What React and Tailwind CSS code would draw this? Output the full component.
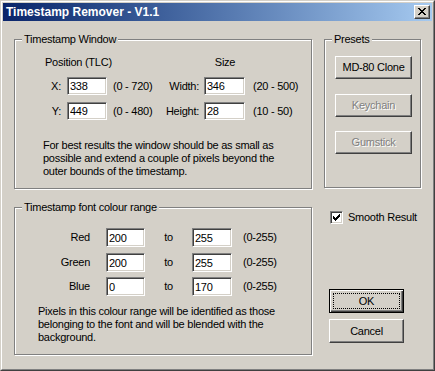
import React from "react";

const raised = "border border-t-white border-l-white border-r-[#404040] border-b-[#404040] shadow-[inset_-1px_-1px_0_#808080] bg-[#d4d0c8]";
const sunken = "border border-t-[#808080] border-l-[#808080] border-r-white border-b-white shadow-[inset_1px_1px_0_#404040,inset_-1px_-1px_0_#d4d0c8] bg-white";
const etched = "relative border border-[#808080] shadow-[inset_1px_1px_0_#fff,1px_1px_0_#fff]";

const Field = ({ value, w = "w-[40px]", h = "h-[18px]" }) => (
    <input
        readOnly
        value={value}
        className={`${sunken} ${w} ${h} pl-[2px] text-[11px] tracking-[-0.25px] leading-none outline-none font-['Liberation_Sans',Arial,sans-serif]`}
    />
);

const GroupLabel = ({ children, left = "left-[7px]" }) => (
    <span className={`absolute -top-[7px] ${left} px-[2px] leading-[13px] bg-[#d4d0c8]`}>{children}</span>
);

const Button = ({ children, disabled, className = "" }) => (
    <div className={`${raised} flex items-center justify-center ${className}`}>
        <span className={disabled ? "text-[#808080] [text-shadow:1px_1px_0_#fff]" : ""}>{children}</span>
    </div>
);

const CloseIcon = () => (
    <svg width="8" height="7" viewBox="0 0 8 7" shapeRendering="crispEdges">
        <path d="M0 0h2v1H0zM6 0h2v1H6zM1 1h2v1H1zM5 1h2v1H5zM2 2h4v1H2zM3 3h2v1H3zM2 4h4v1H2zM1 5h2v1H1zM5 5h2v1H5zM0 6h2v1H0zM6 6h2v1H6z" fill="#000" />
    </svg>
);

const CheckIcon = () => (
    <svg width="7" height="7" viewBox="0 0 7 7" shapeRendering="crispEdges">
        <path d="M6 0h1v1H6zM5 1h2v1H5zM0 2h1v1H0zM4 2h3v1H4zM0 3h2v1H0zM3 3h3v1H3zM0 4h5v1H0zM1 5h3v1H1zM2 6h1v1H2z" fill="#000" />
    </svg>
);

const ColourRow = ({ label, from, to, className = "" }) => (
    <div className={`flex items-center ${className}`}>
        <span className="w-[75px] text-right">{label}</span>
        <span className="ml-[16px]"><Field value={from} w="w-[39px]" h="h-[19px]" /></span>
        <span className="w-[47px] text-center">to</span>
        <Field value={to} w="w-[40px]" h="h-[19px]" />
        <span className="ml-[11px]">(0-255)</span>
    </div>
);

export default function App() {
    return (
        <div className="w-[435px] h-[371px] border border-t-[#d4d0c8] border-l-[#d4d0c8] border-r-[#404040] border-b-[#404040] bg-[#d4d0c8] text-[11px] tracking-[-0.25px] text-black font-['Liberation_Sans',Arial,sans-serif]">
            <div className="h-full border border-t-white border-l-white border-r-[#808080] border-b-[#808080] p-px flex flex-col">
                {/* Title bar */}
                <div className="h-[18px] flex items-center pl-[3px] pr-[2px] bg-gradient-to-r from-[#0a246a] to-[#a6caf0]">
                    <span className="text-white font-bold text-[12px] tracking-normal leading-none">Timestamp Remover - V1.1</span>
                    <div className={`${raised} ml-auto w-[16px] h-[14px] flex items-start justify-start pl-[3px] pt-[2px]`}>
                        <CloseIcon />
                    </div>
                </div>

                <div className="flex pl-[11px] pt-[18px]">
                    {/* Left column */}
                    <div className="flex flex-col">
                        <div className={`${etched} w-[298px] h-[150px]`}>
                            <GroupLabel>Timestamp Window</GroupLabel>
                            <div className="flex pt-[16px] leading-[13px]">
                                <span className="ml-[30px]">Position (TLC)</span>
                                <span className="ml-[103px]">Size</span>
                            </div>
                            <div className="flex items-center mt-[8px]">
                                <span className="w-[46px] text-right">X:</span>
                                <span className="ml-[6px]"><Field value="338" /></span>
                                <span className="ml-[6px] w-[50px]">(0 - 720)</span>
                                <span className="w-[36px] text-right">Width:</span>
                                <span className="ml-[5px]"><Field value="346" w="w-[41px]" /></span>
                                <span className="ml-[8px]">(20 - 500)</span>
                            </div>
                            <div className="flex items-center mt-[7px]">
                                <span className="w-[46px] text-right">Y:</span>
                                <span className="ml-[6px]"><Field value="449" /></span>
                                <span className="ml-[6px] w-[50px]">(0 - 480)</span>
                                <span className="w-[36px] text-right">Height:</span>
                                <span className="ml-[5px]"><Field value="28" w="w-[41px]" /></span>
                                <span className="ml-[8px]">(10 - 50)</span>
                            </div>
                            <p className="mt-[19px] ml-[28px] leading-[13px] whitespace-nowrap">
                                For best results the window should be as small as<br />
                                possible and extend a couple of pixels beyond the<br />
                                outer bounds of the timestamp.
                            </p>
                        </div>

                        <div className={`${etched} mt-[18px] w-[298px] h-[148px]`}>
                            <GroupLabel>Timestamp font colour range</GroupLabel>
                            <div className="pt-[20px]">
                                <ColourRow label="Red" from="200" to="255" />
                                <ColourRow label="Green" from="200" to="255" className="mt-[6px]" />
                                <ColourRow label="Blue" from="0" to="170" className="mt-[5px]" />
                            </div>
                            <p className="mt-[9px] ml-[23px] leading-[13px] whitespace-nowrap">
                                Pixels in this colour range will be identified as those<br />
                                belonging to the font and will be blended with the<br />
                                background.
                            </p>
                        </div>
                    </div>

                    {/* Right column */}
                    <div className="flex flex-col ml-[12px]">
                        <div className={`${etched} w-[97px] h-[149px] flex flex-col pl-[10px] pt-[16px]`}>
                            <GroupLabel>Presets</GroupLabel>
                            <Button className="w-[77px] h-[23px]">MD-80 Clone</Button>
                            <Button disabled className="w-[77px] h-[23px] mt-[15px]">Keychain</Button>
                            <Button disabled className="w-[77px] h-[23px] mt-[14px]">Gumstick</Button>
                        </div>

                        <div className="flex items-center mt-[23px] ml-[6px]">
                            <div className={`${sunken} w-[13px] h-[13px] flex items-center justify-center`}>
                                <CheckIcon />
                            </div>
                            <span className="ml-[5px] leading-[13px]">Smooth Result</span>
                        </div>

                        <div className="mt-[65px] ml-[5px] w-[75px] h-[24px] border border-black">
                            <div className="h-full shadow-[inset_1px_1px_0_#fff,inset_-1px_-1px_0_#404040,inset_-2px_-2px_0_#808080] p-[3px]">
                                <div className="h-full border border-dotted border-black flex items-center justify-center">OK</div>
                            </div>
                        </div>
                        <Button className="mt-[6px] ml-[5px] w-[75px] h-[24px]">Cancel</Button>
                    </div>
                </div>
            </div>
        </div>
    );
}
